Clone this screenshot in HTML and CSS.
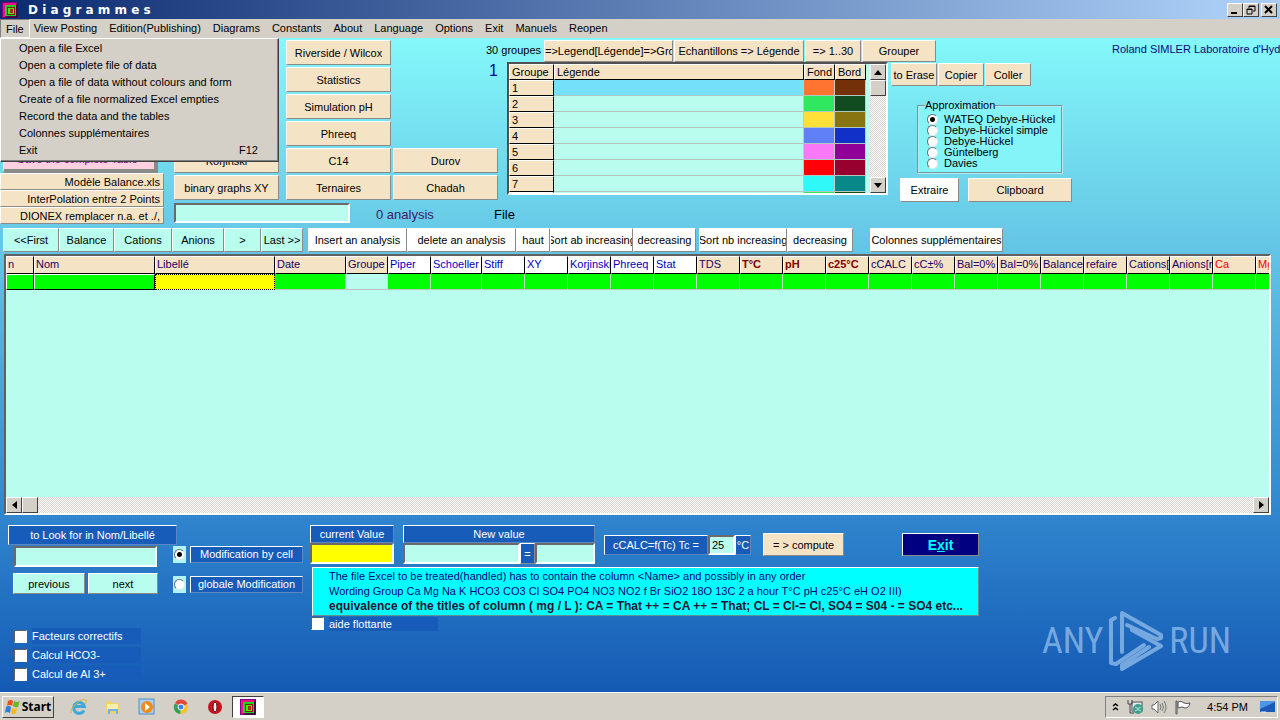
FILE: index.html
```html
<!DOCTYPE html>
<html lang="en">
<head>
  <meta charset="UTF-8" />
  <meta name="viewport" content="width=device-width, initial-scale=1.0"/>
  <title>Diagrammes</title>
  <link rel="stylesheet" href="styles.css">
</head>
<body>

  <svg class="defs" width="0" height="0">
    <symbol id="app-icon" viewBox="0 0 16 16">
      <rect width="16" height="16" fill="#800080"/>
      <path d="M1 1h14v2H3v12H1z" fill="#f0108c"/>
      <rect x="3" y="3" width="11" height="11" fill="#20d020"/>
      <rect x="5" y="5" width="8" height="8" fill="#802000"/>
      <rect x="6" y="6" width="6" height="6" fill="#58e010"/>
      <rect x="8" y="7" width="3" height="4" fill="#a03010"/>
      <path d="M15 1v14H3" fill="none" stroke="#101010"/>
    </symbol>
  </svg>

  <header class="titlebar">
    <svg class="app-icon" width="16" height="16"><use href="#app-icon"/></svg>
    <h1>D i a g r a m m e s</h1>
    <div class="window-buttons">
      <button aria-label="Minimize"><svg width="12" height="10"><path d="M2 8h6" stroke="#000" stroke-width="2"/></svg></button>
      <button aria-label="Restore"><svg width="12" height="10"><path d="M4 3V1h6v5H8M4 1.5h6M2 4h5v5H2zM2 4.500h5" fill="none" stroke="#000"/></svg></button>
      <button class="close" aria-label="Close"><svg width="12" height="10"><path d="M2 1l7 7M9 1l-7 7" stroke="#000" stroke-width="2"/></svg></button>
    </div>
  </header>

  <nav class="menubar">
    <a href="#" class="open">File</a>
    <a href="#">View Posting</a>
    <a href="#">Edition(Publishing)</a>
    <a href="#">Diagrams</a>
    <a href="#">Constants</a>
    <a href="#">About</a>
    <a href="#">Language</a>
    <a href="#">Options</a>
    <a href="#">Exit</a>
    <a href="#">Manuels</a>
    <a href="#">Reopen</a>
    <div class="dropdown">
      <a href="#">Open a file Excel</a>
      <a href="#">Open a complete file of data</a>
      <a href="#">Open a file of data without colours and form</a>
      <a href="#">Create of a file normalized Excel empties</a>
      <a href="#">Record the data and the tables</a>
      <a href="#">Colonnes supplémentaires</a>
      <a href="#"><span>Exit</span><span>F12</span></a>
    </div>
  </nav>

  <main>
    <section class="top">
      <div class="models">
        <button class="save">Save the complete Table</button>
        <button>Modèle Balance.xls</button>
        <button>InterPolation entre 2 Points</button>
        <button>DIONEX remplacer n.a. et ./,</button>
      </div>

      <div class="diagrams">
        <div class="diagram-columns">
          <div class="stack">
            <button>Korjinski</button>
            <button>binary graphs XY</button>
          </div>
          <div class="stack">
            <button>Riverside / Wilcox</button>
            <button>Statistics</button>
            <button>Simulation pH</button>
            <button>Phreeq</button>
            <button>C14</button>
            <button>Ternaires</button>
          </div>
          <div class="stack">
            <span class="current-group">1</span>
            <button>Durov</button>
            <button>Chadah</button>
          </div>
        </div>
        <div class="analysis-line">
          <input type="text" class="sunken" aria-label="File name">
          <span class="count">0 analysis</span>
          <span>File</span>
        </div>
      </div>

      <div class="groups">
        <div class="group-bar">
          <span class="group-count">30 groupes</span>
          <button class="w128">=&gt;Legend[Légende]=&gt;Groupe</button>
          <button class="w130">Echantillons =&gt; Légende</button>
          <button class="w56">=&gt; 1..30</button>
          <button class="w73">Grouper</button>
          <span class="author">Roland SIMLER Laboratoire d'Hydrogéologie</span>
        </div>
        <div class="group-body">
          <div class="group-grid">
            <div class="group-view">
              <table>
                <tr><th>Groupe</th><th>Légende</th><th>Fond</th><th>Bord</th></tr>
                <tr class="selected"><th>1</th><td></td><td class="c1"></td><td class="b1"></td></tr>
                <tr><th>2</th><td></td><td class="c2"></td><td class="b2"></td></tr>
                <tr><th>3</th><td></td><td class="c3"></td><td class="b3"></td></tr>
                <tr><th>4</th><td></td><td class="c4"></td><td class="b4"></td></tr>
                <tr><th>5</th><td></td><td class="c5"></td><td class="b5"></td></tr>
                <tr><th>6</th><td></td><td class="c6"></td><td class="b6"></td></tr>
                <tr><th>7</th><td></td><td class="c7"></td><td class="b7"></td></tr>
                <tr><th></th><td></td><td class="c2"></td><td class="b2"></td></tr>
              </table>
            </div>
            <div class="scrollbar vertical">
              <button aria-label="Scroll up"><svg width="8" height="5"><path d="M0 5L4 0l4 5z"/></svg></button>
              <div class="thumb"></div>
              <button aria-label="Scroll down"><svg width="8" height="5"><path d="M0 0h8L4 5z"/></svg></button>
            </div>
          </div>

          <div class="side">
            <div class="edit-bar">
              <button>to Erase</button>
              <button>Copier</button>
              <button>Coller</button>
            </div>
            <fieldset>
              <legend>Approximation</legend>
              <label><input type="radio" name="approx" checked>WATEQ Debye-Hückel</label>
              <label><input type="radio" name="approx">Debye-Hückel simple</label>
              <label><input type="radio" name="approx">Debye-Hückel</label>
              <label><input type="radio" name="approx">Güntelberg</label>
              <label><input type="radio" name="approx">Davies</label>
            </fieldset>
            <div class="export-bar">
              <button class="white">Extraire</button>
              <button>Clipboard</button>
            </div>
          </div>
        </div>
      </div>
    </section>

    <section class="toolbar">
      <div class="moves">
        <button class="w56">&lt;&lt;First</button>
        <button class="w55">Balance</button>
        <button class="w58">Cations</button>
        <button class="w52">Anions</button>
        <button class="w37">&gt;</button>
        <button class="w42">Last &gt;&gt;</button>
      </div>
      <div class="edits">
        <button class="w99">Insert an analysis</button>
        <button class="w109">delete an analysis</button>
        <button class="w34">haut</button>
        <button class="w83">Sort ab increasing</button>
        <button class="w63">decreasing</button>
      </div>
      <div class="edits">
        <button class="w88">Sort nb increasing</button>
        <button class="w66">decreasing</button>
      </div>
      <div class="edits extra">
        <button>Colonnes supplémentaires</button>
      </div>
    </section>

    <section class="data">
      <div class="data-view">
        <table>
          <colgroup>
            <col class="col-n"><col class="col-nom"><col class="col-lib"><col class="col-date"><col class="col-grp">
            <col><col class="col-sch"><col span="19">
          </colgroup>
          <tr>
            <th>n</th><th>Nom</th><th>Libellé</th><th>Date</th><th>Groupe</th>
            <th class="graph">Piper</th><th class="graph">Schoeller</th><th class="graph">Stiff</th><th class="graph">XY</th>
            <th class="graph">Korjinski</th><th class="graph">Phreeq</th><th class="graph">Stat</th>
            <th>TDS</th><th class="measure">T°C</th><th class="measure">pH</th><th class="measure">c25°C</th>
            <th>cCALC</th><th>cC±%</th><th>Bal=0% :</th><th>Bal=0% :</th><th>Balance</th><th>refaire</th>
            <th>Cations[</th><th>Anions[r</th><th class="ion">Ca</th><th class="ion">Mg</th>
          </tr>
          <tr>
            <td class="fixed"></td><td class="fixed"></td><td class="cursor"></td><td></td><td class="empty"></td>
            <td></td><td></td><td></td><td></td><td></td><td></td><td></td><td></td><td></td><td></td><td></td>
            <td></td><td></td><td></td><td></td><td></td><td></td><td></td><td></td><td></td><td></td>
          </tr>
        </table>
      </div>
      <div class="scrollbar">
        <button aria-label="Scroll left"><svg width="5" height="8"><path d="M5 0v8L0 4z"/></svg></button>
        <div class="thumb"></div>
        <button aria-label="Scroll right"><svg width="5" height="8"><path d="M0 0v8l5-4z"/></svg></button>
      </div>
    </section>

    <section class="bottom">
      <div class="search">
        <label class="caption" for="look">to Look for in Nom/Libellé</label>
        <input type="text" id="look" class="sunken">
        <div class="search-buttons">
          <button>previous</button>
          <button>next</button>
        </div>
        <div class="checks">
          <label><input type="checkbox"><span>Facteurs correctifs</span></label>
          <label><input type="checkbox"><span>Calcul HCO3-</span></label>
          <label><input type="checkbox"><span>Calcul de Al 3+</span></label>
        </div>
      </div>

      <div class="modes">
        <label><span class="dot"><input type="radio" name="mode" checked></span><span class="caption">Modification by cell</span></label>
        <label><span class="dot"><input type="radio" name="mode"></span><span class="caption">globale Modification</span></label>
      </div>

      <div class="values">
        <div class="value-row">
          <div class="current">
            <label class="caption" for="current">current Value</label>
            <input type="text" id="current" class="sunken">
          </div>
          <div class="new">
            <label class="caption" for="newval">New value</label>
            <div class="new-inputs">
              <input type="text" id="newval" class="sunken">
              <button class="equals">=</button>
              <input type="text" class="sunken short" aria-label="New value 2">
            </div>
          </div>
          <div class="ccalc">
            <label class="caption" for="tc">cCALC=f(Tc) Tc =</label>
            <input type="text" id="tc" class="sunken" value="25">
            <span class="caption">°C</span>
          </div>
          <button class="compute">= &gt; compute</button>
          <button class="exit">E<u>x</u>it</button>
        </div>
        <div class="help">
          <p>The file Excel to be treated(handled) has to contain the column &lt;Name&gt; and possibly in any order</p>
          <p>Wording Group Ca Mg Na K HCO3 CO3 Cl SO4 PO4 NO3 NO2 f Br SiO2 18O 13C 2 a hour T°C pH c25°C eH O2 III)</p>
          <p class="strong">equivalence of the titles of column ( mg / L ): CA = That ++ = CA ++ = That; CL = Cl-= Cl, SO4 = S04 - = SO4 etc...</p>
        </div>
        <label class="floating"><input type="checkbox"><span>aide flottante</span></label>
      </div>

      <div class="watermark">
        <span>ANY</span>
        <svg width="56" height="62" viewBox="0 0 56 62">
          <g fill="none" stroke="#8db9ea" stroke-width="4" stroke-linejoin="round" stroke-linecap="round">
            <path d="M7 8L3 10v43l5 1 28-19"/>
            <path d="M14 42V3l39 22v3l-4 1-30-14"/>
            <path d="M24 20l29 16-39 23v-4l27-18"/>
          </g>
        </svg>
        <span>RUN</span>
      </div>
    </section>
  </main>

  <footer class="taskbar">
    <button class="start">
      <svg width="16" height="16" viewBox="0 0 16 16">
        <path d="M3 2q3-2 5 0L7 7Q5 5 2 7z" fill="#e8501c"/>
        <path d="M9 2q3 2 6 0l-2 6q-3 1-5-1z" fill="#6cb52d"/>
        <path d="M1 8q3-2 5 0l-1 6q-3-2-5 0z" fill="#2f7fd6"/>
        <path d="M7 9q3 2 5 0l-1 5q-3 2-5 0z" fill="#f7b916"/>
      </svg>
      Start
    </button>
    <div class="quick">
      <a href="#" aria-label="Internet Explorer">
        <svg width="18" height="18" viewBox="0 0 18 18">
          <path d="M14 12.500A5.500 5.500 0 1 1 14.500 8.500H5" fill="none" stroke="#3fa9dd" stroke-width="3"/>
          <path d="M1 15C-1 11 11-1 16 2c1 1 0 3-1 4" fill="none" stroke="#e2b32c" stroke-width="1"/>
        </svg>
      </a>
      <a href="#" aria-label="Explorer">
        <svg width="18" height="18" viewBox="0 0 18 18">
          <path d="M2 3h5l1 2h8v10H2z" fill="#efd36a"/>
          <path d="M3 6h11v6H3z" fill="#f9eeb0"/>
          <path d="M4 16v-5h10v5h-2v-3H6v3z" fill="#6db4e4"/>
        </svg>
      </a>
      <a href="#" aria-label="Media Player">
        <svg width="18" height="18" viewBox="0 0 18 18">
          <rect x="1" y="1" width="15" height="15" fill="#a8d0f0" stroke="#4f8fc4"/>
          <circle cx="9" cy="9" r="6" fill="#f08a1c"/>
          <path d="M7 5l5 4-5 4z" fill="#fff"/>
        </svg>
      </a>
      <a href="#" aria-label="Chrome">
        <svg width="16" height="16" viewBox="0 0 16 16">
          <path d="M8 8L2 4a7 7 0 0 1 12.500 1z" fill="#dd4b3a"/>
          <path d="M8 8L1.700 4.500A7 7 0 0 0 7.500 15z" fill="#35a053"/>
          <path d="M8 8l6.500-3A7 7 0 0 1 7.500 15z" fill="#f5c62c"/>
          <circle cx="8" cy="8" r="3" fill="#3f82ee" stroke="#fff"/>
        </svg>
      </a>
      <a href="#" aria-label="Opera">
        <svg width="16" height="16" viewBox="0 0 16 16">
          <circle cx="8" cy="8" r="7" fill="#c21420"/>
          <ellipse cx="8" cy="8" rx="2" ry="5" fill="#eee" stroke="#6c0710"/>
        </svg>
      </a>
      <button class="running" aria-label="Diagrammes"><svg width="16" height="16"><use href="#app-icon"/></svg></button>
    </div>
    <div class="tray">
      <svg width="7" height="10"><path d="M1 4l2.500-2L6 4M1 8l2.500-2L6 8" fill="none" stroke="#000" stroke-width="1.500"/></svg>
      <svg class="net" width="16" height="16" viewBox="0 0 16 16">
        <rect x="5" y="3" width="10" height="9" fill="#dfe6e6" stroke="#555"/>
        <path d="M1 1v4h4V1M3 5v9h4" fill="none" stroke="#444"/>
        <circle cx="11" cy="10" r="5" fill="#3f9f8c"/>
        <path d="M8 8q3 3 6 0M8 12q3-3 6 0" fill="none" stroke="#b5e8d8"/>
      </svg>
      <svg class="sound" width="16" height="16" viewBox="0 0 16 16">
        <path d="M1 6h2l4-4v12l-4-4H1z" fill="#fff" stroke="#666"/>
        <path d="M9 5q2 3 0 6M11 4q3 4 0 8M13 2q4 6 0 12" fill="none" stroke="#777"/>
      </svg>
      <svg class="flag" width="16" height="16" viewBox="0 0 16 16">
        <path d="M1 2h1v13H1z" fill="#fff" stroke="#555"/>
        <path d="M3 3q3-2 6 1 3 1 6 0-1 5-5 5-3-2-7 0z" fill="#fff" stroke="#555"/>
      </svg>
      <span class="clock">4:54 PM</span>
      <svg class="desktop" width="15" height="14"><rect x="0" y="1" width="15" height="11" fill="#1c58b8"/><path d="M0 9L15 2v-1H0z" fill="#4e96e6"/><path d="M1 12h5" stroke="#d8ecff"/></svg>
    </div>
  </footer>

</body>
</html>
```
FILE: styles.css
```css
* {
  box-sizing: border-box;
}
body {
  margin: 0;
  min-height: 100vh;
  display: flex;
  flex-direction: column;
  font-family: "Liberation Sans", Arial, sans-serif;
  font-size: 11px;
  line-height: 14px;
  color: #000;
  background: #d4d0c8;
  overflow: hidden;
}
.defs {
  position: absolute;
}
a {
  color: inherit;
  text-decoration: none;
}
p {
  margin: 0;
}
button {
  font: inherit;
  color: inherit;
  padding: 0;
  background: #f5e3c6;
  border: 1px solid;
  border-color: #fff #8a8a88 #8a8a88 #fff;
  display: flex;
  align-items: center;
  justify-content: center;
  white-space: nowrap;
  overflow: hidden;
}
input {
  font: inherit;
  margin: 0;
}
.sunken {
  background: #b9fdee;
  border: 2px solid;
  border-color: #6a6a6a #fff #fff #6a6a6a;
  border-radius: 0;
  padding: 0 2px;
  min-width: 0;
}

/* title and menu */
.titlebar {
  height: 19px;
  display: flex;
  align-items: center;
  padding: 0 3px 0 2px;
  background: linear-gradient(90deg, #0c2a70, #a8ccf4 95%);
  color: #fff;
}
.titlebar h1 {
  flex: 1;
  margin: 0 0 0 10px;
  font: bold 12px/18px "DejaVu Sans", sans-serif;
}
.window-buttons {
  display: flex;
}
.window-buttons button {
  width: 16px;
  height: 14px;
  background: #d4d0c8;
  border-color: #fff #404040 #404040 #fff;
}
.window-buttons .close {
  margin-left: 2px;
}
.menubar {
  position: relative;
  height: 19px;
  display: flex;
  background: #d4d0c8;
}
.menubar > a {
  padding: 2px 6px;
}
.menubar > .open {
  padding: 2px 5px;
  border: 1px solid;
  border-color: #808080 #fff #fff #808080;
}
.menubar > a:nth-child(2) {
  padding-left: 4px;
}
.dropdown {
  position: absolute;
  left: 0;
  top: 19px;
  width: 279px;
  padding: 1px 1px 2px;
  background: #d4d0c8;
  border: 1px solid;
  border-color: #fff #404040 #404040 #fff;
  box-shadow: inset -1px -1px #808080;
  z-index: 5;
}
.dropdown a {
  display: flex;
  justify-content: space-between;
  line-height: 17px;
  padding: 0 19px 0 17px;
}

main {
  flex: 1;
  background: linear-gradient(#84f8fa, #66c8e6 30%, #2f84cd 74%, #145ab4);
}

/* upper panel */
.top {
  display: flex;
  height: 190px;
}
.models {
  width: 164px;
  flex: none;
  display: flex;
  flex-direction: column;
  padding-top: 109px;
}
.models button {
  height: 17px;
  justify-content: flex-end;
  padding-right: 3px;
}
.models .save {
  height: 26px;
  margin: 0 6px 0 3px;
  justify-content: center;
  background: #ffd0e0;
  color: #800080;
  border-width: 1px 4px 4px 1px;
}
.diagrams {
  width: 333px;
  flex: none;
  margin-left: 10px;
}
.diagram-columns {
  display: flex;
  gap: 2px;
  height: 162px;
}
.stack {
  width: 105px;
  display: flex;
  flex-direction: column;
  justify-content: flex-end;
  gap: 2px;
}
.stack:first-child {
  margin-right: 5px;
}
.stack button {
  height: 25px;
}
.current-group {
  align-self: flex-end;
  margin-bottom: auto;
  padding-top: 26px;
  font-size: 16px;
  color: #000090;
}
.analysis-line {
  display: flex;
  margin-top: 3px;
  font-size: 13px;
  line-height: 24px;
}
.analysis-line input {
  flex: none;
  width: 176px;
  height: 20px;
}
.analysis-line .count {
  flex: none;
  width: 118px;
  margin-left: 26px;
  color: #402060;
}
.groups {
  flex: 1;
  min-width: 0;
}
.group-bar {
  display: flex;
  height: 24px;
  padding-top: 2px;
  margin-left: -21px;
  gap: 1px;
}
.group-bar button {
  flex: none;
  justify-content: flex-start;
}
.group-bar .w130,
.group-bar .w56,
.group-bar .w73 {
  justify-content: center;
}
.group-count {
  flex: none;
  width: 57px;
  padding-top: 3px;
}
.author {
  margin-left: 175px;
  padding-top: 2px;
  color: #0a0a80;
  white-space: nowrap;
  overflow: hidden;
}
.group-body {
  display: flex;
}
.group-grid {
  flex: none;
  width: 381px;
  height: 133px;
  display: flex;
  justify-content: space-between;
  background: #b9fdee;
  border: 2px solid;
  border-color: #505050 #fff #fff #505050;
}
.group-view {
  overflow: hidden;
}
table {
  border-collapse: separate;
  border-spacing: 0;
  table-layout: fixed;
}
th,
td {
  padding: 0;
}
th {
  font-weight: normal;
  text-align: left;
  white-space: nowrap;
  overflow: hidden;
  background: #f5e3c6;
}
.group-view table {
  width: 357px;
}
.group-view tr {
  height: 16px;
}
.group-view th {
  width: 45px;
  height: 16px;
  padding-left: 2px;
  border: 1px solid;
  border-color: #fff #000 #000 #fff;
}
.group-view th:nth-child(2) {
  width: 250px;
}
.group-view th:nth-child(n+3) {
  width: 31px;
}
.group-view td {
  border-right: 1px solid #c8c8c8;
  border-bottom: 1px solid #b0c8c0;
}
.selected td:nth-child(2) {
  background: #74e0fa;
}
.c1 { background: #ff7430; }
.b1 { background: #743008; }
.c2 { background: #30e860; }
.b2 { background: #104c20; }
.c3 { background: #ffe038; }
.b3 { background: #887410; }
.c4 { background: #6080f8; }
.b4 { background: #1030c8; }
.c5 { background: #f878f8; }
.b5 { background: #900098; }
.c6 { background: #ff0008; }
.b6 { background: #980030; }
.c7 { background: #30f8f8; }
.b7 { background: #088888; }

.scrollbar {
  display: flex;
  background: repeating-conic-gradient(#fff 0 25%, #d8d4cc 0 50%) 0 0 / 2px 2px;
}
.scrollbar button,
.thumb {
  width: 16px;
  height: 16px;
  flex: none;
  background: #d4d0c8;
  border: 1px solid;
  border-color: #fff #404040 #404040 #fff;
}
.scrollbar button:last-child {
  margin-left: auto;
}
.scrollbar.vertical {
  flex-direction: column;
}
.scrollbar.vertical button:last-child {
  margin: auto 0 0;
}
.side {
  margin-left: 3px;
}
.edit-bar {
  display: flex;
  gap: 1px;
  padding-top: 1px;
}
.edit-bar button {
  width: 46px;
  height: 23px;
}
fieldset {
  width: 146px;
  margin: 13px 0 4px 26px;
  padding: 2px 0 3px 8px;
  border: 2px groove #b8e8f0;
  background: #84f4f8;
}
legend {
  padding: 0;
  margin-left: -2px;
  line-height: 13px;
}
fieldset label {
  display: flex;
  align-items: center;
  gap: 6px;
  line-height: 11px;
}
input[type="radio"] {
  appearance: none;
  width: 11px;
  height: 11px;
  border: 1px solid;
  border-color: #707070 #e8e8e8 #e8e8e8 #707070;
  border-radius: 50%;
  background: #fff;
}
input[type="radio"]:checked {
  background: radial-gradient(circle, #000 2px, #fff 3px);
}
.export-bar {
  display: flex;
  gap: 9px;
  margin-left: 9px;
}
.export-bar button {
  width: 104px;
  height: 24px;
}
.export-bar .white {
  width: 59px;
  background: #fff;
}

.w34 { width: 34px; }
.w37 { width: 37px; }
.w42 { width: 42px; }
.w52 { width: 52px; }
.w55 { width: 55px; }
.w56 { width: 56px; }
.w58 { width: 58px; }
.w63 { width: 63px; }
.w66 { width: 66px; }
.w73 { width: 74px; }
.w83 { width: 83px; }
.w88 { width: 88px; }
.w99 { width: 99px; }
.w109 { width: 109px; }
.w128 { width: 129px; }
.w130 { width: 130px; }

/* row of commands over the data */
.toolbar {
  display: flex;
  padding-left: 3px;
}
.toolbar button {
  height: 24px;
}
.moves,
.edits {
  display: flex;
}
.moves {
  margin-right: 5px;
}
.moves button {
  background: #b9fdee;
}
.edits {
  margin-right: 3px;
}
.edits button {
  background: #fff;
}
.extra {
  margin-left: 14px;
}
.extra button {
  width: 133px;
}

/* data grid */
.data {
  margin: 2px 9px 0 4px;
  border: 2px solid;
  border-color: #606060 #fff #fff #606060;
  background: #b9fdee;
}
.data-view {
  height: 241px;
  overflow: hidden;
}
.data table {
  width: 1293px;
}
.data col { width: 43px; }
.data .col-n { width: 28px; }
.data .col-nom { width: 121px; }
.data .col-lib { width: 120px; }
.data .col-date { width: 71px; }
.data .col-grp { width: 42px; }
.data .col-sch { width: 51px; }
.data th {
  height: 18px;
  padding: 0 0 2px 1px;
  color: #200060;
  border: 1px solid;
  border-color: #fff #000 #000 #fff;
}
.data .graph {
  background: #fff;
  color: #0000c0;
}
.data .measure {
  color: #800000;
  font-weight: bold;
}
.data .ion {
  color: #f00000;
}
.data td {
  height: 16px;
  background: #0f0;
  border-right: 1px solid #c0e8c0;
  border-bottom: 1px solid #c0c0c0;
}
.data .fixed {
  border: 1px solid;
  border-color: #fff #000 #000 #fff;
}
.data .cursor {
  background: #ff0;
  border: 1px dotted #000;
}
.data .empty {
  background: #b9fdee;
}

/* lower panel */
.bottom {
  position: relative;
  display: flex;
  padding: 10px 0 7px 8px;
  color: #fff;
}
.caption {
  display: block;
  background: #165cb8;
  border: 1px solid;
  border-color: #fff #5c86c0 #5c86c0 #fff;
  text-align: center;
  white-space: nowrap;
}
.search {
  width: 169px;
}
.search > .caption {
  line-height: 18px;
}
.search > input {
  display: block;
  width: 143px;
  height: 21px;
  margin: 1px 0 6px 6px;
}
.search-buttons {
  display: flex;
  gap: 3px;
  margin-left: 5px;
}
.search-buttons button {
  width: 72px;
  height: 21px;
  background: #b9fdee;
  color: #000;
}
.search-buttons button:last-child {
  width: 70px;
}
.checks {
  margin: 34px 0 0 6px;
}
.checks label {
  display: flex;
  gap: 5px;
  margin-bottom: 3px;
}
.checks span,
.floating span {
  width: 109px;
  line-height: 16px;
  background: #165cb8;
}
input[type="checkbox"] {
  appearance: none;
  width: 13px;
  height: 13px;
  margin-top: 2px;
  background: #fff;
  border: 1px solid;
  border-color: #606060 #fff #fff #606060;
}
.modes {
  padding-top: 21px;
  margin-left: -4px;
}
.modes label {
  display: flex;
  gap: 4px;
  margin-bottom: 13px;
}
.modes .caption {
  width: 113px;
  height: 17px;
}
.dot {
  width: 13px;
  height: 17px;
  display: flex;
  align-items: center;
  justify-content: center;
  background: #b0f4f4;
}
.dot input {
  flex: none;
}
.values {
  width: 669px;
  margin-left: 7px;
}
.value-row {
  display: flex;
  align-items: center;
}
.value-row .caption {
  line-height: 16px;
}
.current {
  width: 84px;
}
.current input {
  display: block;
  width: 84px;
  height: 21px;
  background: #ff0;
}
.new {
  width: 192px;
  margin-left: 9px;
}
.new-inputs {
  display: flex;
}
.new-inputs input {
  width: 117px;
  height: 21px;
}
.new-inputs .equals {
  width: 15px;
  height: 21px;
  background: #165cb8;
}
.new-inputs .short {
  width: 60px;
}
.ccalc {
  display: flex;
  margin-left: 9px;
}
.ccalc .caption {
  width: 104px;
  height: 20px;
  line-height: 18px;
}
.ccalc input {
  width: 27px;
}
.ccalc span.caption {
  width: 16px;
}
.compute {
  width: 81px;
  height: 23px;
  margin-left: 12px;
  color: #000;
}
.exit {
  width: 77px;
  height: 23px;
  margin-left: auto;
  background: #000080;
  color: #0ff;
  font-size: 14px;
  font-weight: bold;
}
.help {
  margin: 3px 0 1px 2px;
  padding: 1px 0 1px 16px;
  background: #0ff;
  border: 1px solid;
  border-color: #fff #609090 #609090 #fff;
  color: #000080;
  line-height: 15px;
  white-space: nowrap;
  overflow: hidden;
}
.help .strong {
  font-size: 12px;
  font-weight: bold;
  color: #301030;
}
.floating {
  display: flex;
  gap: 5px;
  margin-left: 1px;
}
.floating span {
  line-height: 14px;
}
.floating input[type="checkbox"] {
  margin-top: 0;
}
.watermark {
  position: absolute;
  right: 49px;
  top: 95px;
  display: flex;
  align-items: center;
  gap: 5px;
  font: 36px/62px "Roboto Condensed", "Open Sans Condensed", "Liberation Sans Narrow", Roboto, sans-serif;
  color: #8db9ea;
  opacity: 0.8;
}

/* taskbar */
.taskbar {
  height: 28px;
  display: flex;
  align-items: center;
  padding: 1px 2px 0;
  border-top: 1px solid #fff;
  background: #d4d0c8;
}
.start {
  width: 52px;
  height: 22px;
  gap: 1px;
  background: #d4d0c8;
  border-color: #fff #404040 #404040 #fff;
  font-family: "Noto Sans", sans-serif;
  font-size: 12px;
  font-weight: bold;
}
.quick {
  display: flex;
  align-items: center;
  margin-left: 8px;
}
.quick a {
  width: 34px;
  display: flex;
  justify-content: center;
}
.running {
  width: 32px;
  height: 22px;
  background: #fff;
  border-color: #404040 #fff #fff #404040;
}
.tray {
  display: flex;
  align-items: center;
  gap: 8px;
  height: 22px;
  margin-left: auto;
  padding: 0 2px 0 6px;
  border: 1px solid;
  border-color: #808080 #fff #fff #808080;
}
.clock {
  margin: 0 4px 0 8px;
}
```
